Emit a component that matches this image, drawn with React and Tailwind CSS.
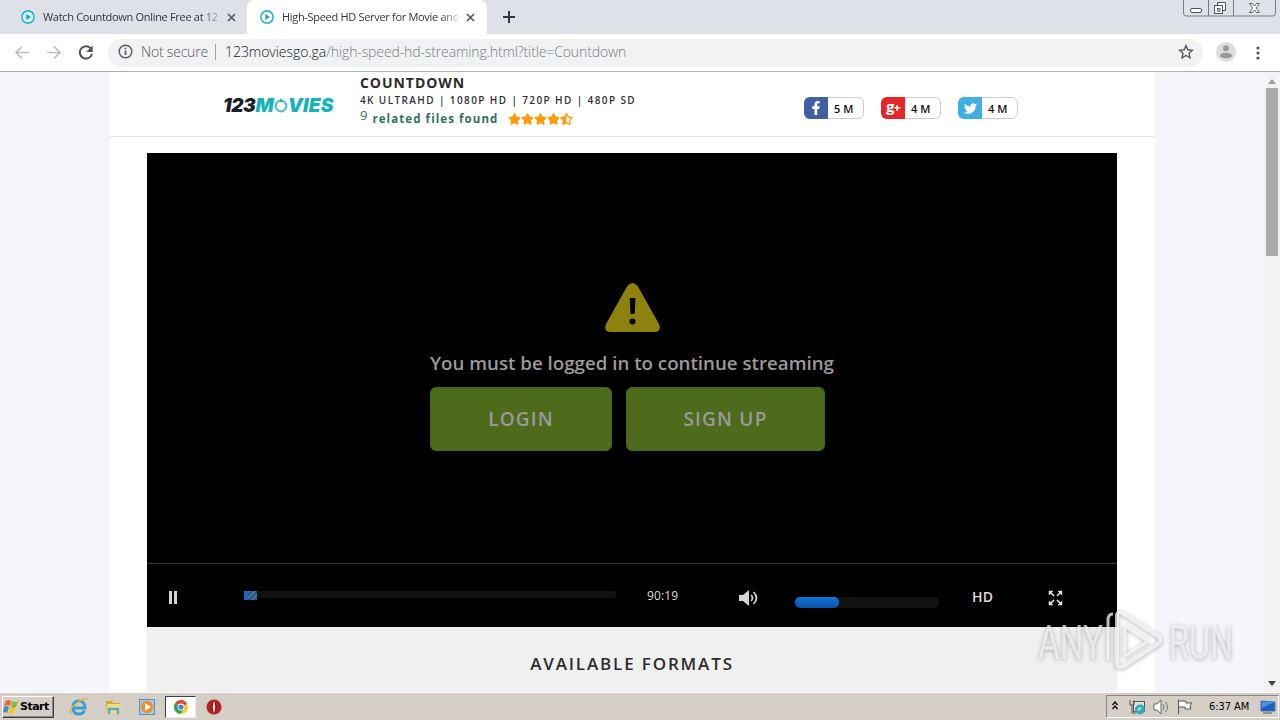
import { FaFacebookF, FaTwitter, FaStar, FaRegStar, FaStarHalfAlt } from 'react-icons/fa';

const shares = [
  { name: 'facebook', count: '5 M', color: 'bg-[#41609f]' },
  { name: 'google', count: '4 M', color: 'bg-[#e52528]' },
  { name: 'twitter', count: '4 M', color: 'bg-[#41b0e0]' },
];

function PlayBadge({ fill }) {
  return (
    <svg className="w-[14px] h-[14px] shrink-0" viewBox="0 0 14 14">
      <circle cx="7" cy="7" r="6.1" fill={fill} stroke="#2bb5c8" strokeWidth="1.6" />
      <path d="M5.3 4v6l4.6-3z" fill="#18a5bd" />
    </svg>
  );
}

function CloseIcon() {
  return (
    <svg className="w-[9px] h-[9px] shrink-0" viewBox="0 0 9 9">
      <path d="M1 1l7 7M8 1L1 8" stroke="#55585d" strokeWidth="1.7" />
    </svg>
  );
}

function TabStrip() {
  return (
    <div className="h-[34px] shrink-0 flex items-start bg-[#dee1e8] text-[11px] text-[#32353a]">
      <div className="w-[247px] h-[34px] pl-[21px] flex items-center">
        <PlayBadge fill="#d7f2f5" />
        <div className="ml-2 w-[176px] whitespace-nowrap tracking-[-0.31px] [mask-image:linear-gradient(to_right,black_158px,transparent_181px)]">
          Watch Countdown Online Free at 12
        </div>
        <div className="ml-[8px]"><CloseIcon /></div>
      </div>
      <div className="w-[240px] h-[34px] pl-[13px] flex items-center bg-white rounded-t-[8px]">
        <PlayBadge fill="#ffffff" />
        <div className="ml-[8px] w-[176px] whitespace-nowrap tracking-[-0.31px] [mask-image:linear-gradient(to_right,black_158px,transparent_181px)]">
          High-Speed HD Server for Movie and
        </div>
        <div className="ml-[8px]"><CloseIcon /></div>
      </div>
      <svg className="w-3 h-3 mt-[11px] ml-[16px]" viewBox="0 0 12 12">
        <path d="M6 0v12M0 6h12" stroke="#34373c" strokeWidth="2" />
      </svg>
      <svg className="w-[94px] h-[18px] ml-auto mr-[3px]" viewBox="0 0 94 18" fill="none">
        <path d="M.5 0v13q0 3 3 3h86q3 0 3-3V0M25.500 0v16M50.500 0v16" stroke="#787c86" />
        <rect x="7.500" y="8.500" width="11" height="4" rx="1.500" fill="#fff" stroke="#50545d" />
        <path d="M34.500 5.500v-3h8v8h-3" fill="#fff" stroke="#50545d" />
        <rect x="31.500" y="5.500" width="8" height="8" fill="#fff" stroke="#50545d" />
        <rect x="34.500" y="8.500" width="2.500" height="2.500" stroke="#50545d" />
        <path d="M66.500 3.500h3l2 2.500 2-2.500h3l-3.200 4.500 3.200 4.500h-3l-2-2.500-2 2.500h-3l3.200-4.500z" fill="#fff" stroke="#60646d" />
      </svg>
    </div>
  );
}

function AddressBar() {
  return (
    <div className="h-[38px] shrink-0 flex items-center bg-white border-b border-[#adb0b0]">
      <svg className="w-[80px] h-4 ml-[14px] shrink-0" viewBox="0 0 80 16" fill="none" strokeWidth="1.7">
        <path d="M15 7.500H2M8 1.500L2 7.500l6 6M33 7.500h13M40 1.500l6 6-6 6" stroke="#babcbe" />
        <path d="M77 3.700A6.200 6.200 0 1 0 78 9" stroke="#515458" strokeWidth="2" />
        <path d="M78.700.5v6.500h-6.500z" fill="#515458" />
      </svg>
      <div className="ml-[14px] w-[1095px] h-[28px] rounded-full bg-[#f0f2f4] flex items-center px-[10px] pb-[2px] text-[14px] whitespace-nowrap">
        <svg className="w-[15px] h-[15px] shrink-0" viewBox="0 0 15 15" fill="none">
          <circle cx="7.500" cy="7.500" r="6.300" stroke="#595c60" strokeWidth="1.500" />
          <path d="M7.500 6.500v4.500M7.500 3.700v1.600" stroke="#595c60" strokeWidth="1.700" />
        </svg>
        <span className="ml-[8px] w-[67px] font-light tracking-[-0.2px] text-[#55585d]">Not secure</span>
        <span className="ml-[7px] w-px h-4 bg-[#9da0a5]" />
        <span className="ml-[9px] font-light tracking-[-0.05px] text-[#15181d]">123moviesgo.ga</span>
        <span className="font-light tracking-[-0.12px] text-[#777b81]">/high-speed-hd-streaming.html?title=Countdown</span>
        <svg className="w-[16px] h-[16px] ml-auto mr-[-1px] shrink-0" viewBox="0 0 16 16">
          <path d="M8 1.500l1.800 4.300 4.700.4-3.500 3.100 1 4.600L8 11.500l-4 2.400 1-4.600-3.500-3.100 4.700-.4z" fill="none" stroke="#55585c" strokeWidth="1.400" />
        </svg>
      </div>
      <svg className="w-5 h-5 ml-[13px] mb-[2px]" viewBox="0 0 20 20">
        <circle cx="10" cy="10" r="10" fill="#dcdcdc" />
        <circle cx="10" cy="6.300" r="3" fill="#999" />
        <ellipse cx="10" cy="13.500" rx="6" ry="2.800" fill="#999" />
      </svg>
      <svg className="w-1 h-[14px] ml-[20px]" viewBox="0 0 4 14" fill="#505358">
        <circle cx="2" cy="2" r="1.600" /><circle cx="2" cy="7" r="1.600" /><circle cx="2" cy="12" r="1.600" />
      </svg>
    </div>
  );
}

function ShareIcon({ name }) {
  if (name === 'facebook') return <FaFacebookF className="w-[14px] h-[14px]" />;
  if (name === 'twitter') return <FaTwitter className="w-[13px] h-[13px]" />;
  return <span className="text-[15px] leading-none font-bold tracking-[-1px] pb-[4px]">g<span className="text-[13px]">+</span></span>;
}

function SiteHeader() {
  return (
    <div className="h-[65px] shrink-0 flex border-b border-[#e5e5e5] bg-white">
      <div className="ml-[113px] mt-[22px] w-[137px] h-[22px] flex items-center font-['Inter'] text-[19px] leading-none font-black italic">
        <span className="text-[#1c1f2b] tracking-[-0.4px]">123</span>
        <span className="text-[#16b3bb] tracking-[0.2px] flex items-center">
          M
          <svg className="w-[14px] h-[15px]" viewBox="0 0 14 15">
            <circle cx="7" cy="8" r="5.300" fill="none" stroke="#62c6c9" strokeWidth="2.400" />
            <path d="M6.500 0l3 4h-4z" fill="#16b3bb" />
          </svg>
          VIES
        </span>
      </div>
      <div className="w-[444px] whitespace-nowrap">
        <div className="mt-[2px] h-[17px] text-[14px] leading-[17px] font-bold tracking-[0.95px] text-[#2b2b2b]">COUNTDOWN</div>
        <div className="mt-px h-[16px] text-[10px] leading-[17px] font-semibold tracking-[1.39px] text-[#303030]">4K ULTRAHD | 1080P HD | 720P HD | 480P SD</div>
        <div className="flex h-[20px] text-[#33705f]">
          <span className="text-[13px] leading-[15px]">9</span>
          <span className="ml-[5px] w-[125px] text-[11.5px] leading-[22px] font-bold tracking-[1.08px]">related files found</span>
          <span className="ml-[11px] mt-[5px] flex text-[#ff9c0d]">
            {[0, 1, 2, 3].map((n) => <FaStar key={n} className="w-[13px] h-[12px]" />)}
            <span className="relative w-[13px] h-[12px]">
              <FaRegStar className="absolute inset-0 w-[13px] h-[12px] opacity-60" />
              <FaStarHalfAlt className="absolute inset-0 w-[13px] h-[12px]" />
            </span>
          </span>
        </div>
      </div>
      <div className="mt-[25px] flex gap-[17px]">
        {shares.map((s) => (
          <div key={s.name} className="w-[60px] h-[22px] flex rounded-[6px] border border-[#cccccc] bg-white">
            <div className={`w-[24px] h-[22px] -ml-px -mt-px rounded-l-[6px] shrink-0 flex items-center justify-center text-white ${s.color}`}>
              <ShareIcon name={s.name} />
            </div>
            <span className="ml-[6px] text-[11px] leading-[22px] font-semibold tracking-[0.1px] text-[#111] whitespace-nowrap">{s.count}</span>
          </div>
        ))}
      </div>
    </div>
  );
}

function Player() {
  return (
    <div className="mt-4 ml-[37px] w-[970px] h-[474px] shrink-0 bg-black flex flex-col">
      <div className="h-[410px] pl-[283px] text-[#9a9a9a]">
        <svg className="mt-[130px] ml-[175px] w-[55px] h-[49px]" viewBox="0 0 55 49">
          <path d="M22 3.500Q27.500-3.500 33 3.500L54 41q3 8-5 8H6q-8 0-5-8z" fill="#8e820f" />
          <path d="M24.700 15h5.800l-.8 16h-4.200z" fill="#000" />
          <circle cx="27.500" cy="38.500" r="3" fill="#000" />
        </svg>
        <p className="mt-[17px] h-[28px] text-[18.72px] leading-[28px] font-semibold whitespace-nowrap">You must be logged in to continue streaming</p>
        <div className="mt-[10px] flex gap-[14px] text-[19px] font-semibold tracking-[1.2px]">
          <button className="w-[182px] h-[64px] rounded-[6px] bg-[#4d6b1b] border border-[#3d651b]">LOGIN</button>
          <button className="w-[199px] h-[64px] rounded-[6px] bg-[#4d6b1b] border border-[#3d651b]">SIGN UP</button>
        </div>
      </div>
      <div className="h-[64px] border-t border-[#3a3a3a] flex items-start text-[#dddddd]">
        <div className="ml-[22px] mt-[27px] flex gap-[2px]">
          <span className="w-[3px] h-[13px] bg-[#d4d4d4]" />
          <span className="w-[3px] h-[13px] bg-[#d4d4d4]" />
        </div>
        <div className="ml-[67px] mt-[27px] w-[372px] h-[9px] flex">
          <span className="w-[4px] h-[9px] bg-[#1b67b9]" />
          <span className="w-[9px] h-[9px] bg-[repeating-linear-gradient(135deg,#50718f_0_2px,#17579b_2px_4px)]" />
          <span className="w-[359px] h-[7px] bg-[#111] rounded-r-[3px]" />
        </div>
        <span className="ml-[31px] mt-[23px] w-[92px] text-[12px] leading-[18px] tracking-[0.1px]">90:19</span>
        <svg className="mt-[26px] w-[20px] h-4" viewBox="0 0 20 16">
          <path d="M0 5h4l6-5v16l-6-5H0z" fill="#d5d5d5" />
          <path d="M12 5q3 3 0 6M14.500 2q6 6 0 12" fill="none" stroke="#d5d5d5" strokeWidth="1.700" />
        </svg>
        <div className="ml-[36px] mt-[33px] w-[144px] h-[11px] rounded-[5px] bg-[#111]">
          <div className="w-[44px] h-[11px] rounded-[5px] bg-gradient-to-b from-[#1474dc] to-[#0b50a6]" />
        </div>
        <span className="ml-[33px] mt-[22px] w-[76px] text-[14px] leading-[22px] font-semibold tracking-[0.3px]">HD</span>
        <svg className="mt-[26px] w-[15px] h-4" viewBox="0 0 15 16" fill="#e3e3e3" stroke="#e3e3e3">
          <path d="M1 1h4L1 5zM14 1h-4l4 4zM1 15h4l-4-4zM14 15h-4l4-4z" strokeWidth=".5" />
          <path d="M2 2l4 4M13 2L9 6M2 14l4-4M13 14l-4-4" strokeWidth="1.600" />
        </svg>
      </div>
    </div>
  );
}

function Scrollbar() {
  return (
    <div className="w-[16px] shrink-0 bg-[#f1f2f3] flex flex-col items-center">
      <svg className="w-2 h-[5px] mt-[7px]" viewBox="0 0 8 5"><path d="M0 5l4-5 4 5z" fill="#9b9b9b" /></svg>
      <div className="mt-[4px] w-[12px] h-[168px] bg-[#a9a9a9]" />
      <svg className="w-2 h-[5px] mt-auto mb-[6px]" viewBox="0 0 8 5"><path d="M0 0l4 5 4-5z" fill="#444" /></svg>
    </div>
  );
}

function Watermark() {
  return (
    <svg className="absolute left-[1030px] top-[602px] w-[210px] h-[78px] overflow-visible drop-shadow-[0_1px_2px_rgba(0,0,0,0.4)]" viewBox="0 0 210 78">
      <g fill="#f7f7f7" fillOpacity=".7" fontFamily="Roboto" fontSize="48" fontWeight="400">
        <text x="8" y="57" textLength="65" lengthAdjust="spacingAndGlyphs">ANY</text>
        <text x="139" y="57" textLength="64" lengthAdjust="spacingAndGlyphs">RUN</text>
      </g>
      <g fill="none" stroke="#fafafa" strokeOpacity=".75" strokeLinejoin="round">
        <path d="M83 12q-5 0-5 6v40" strokeWidth="3" />
        <path d="M87 12v48q0 7 7 4l34-22q5-4 0-8L92 11q-5-2-5 3" strokeWidth="4" />
        <path d="M95 24v30l23-15z" strokeWidth="3" />
      </g>
    </svg>
  );
}

function Taskbar() {
  return (
    <div className="h-[28px] shrink-0 flex items-center bg-[#d5cec7] border-t border-white font-['DejaVu_Sans_Condensed','Liberation_Sans',sans-serif] text-black">
      <div className="ml-[2px] w-[52px] h-[22px] flex items-center gap-px bg-[#d5cec7] border border-t-white border-l-white border-r-[#404040] border-b-[#404040] shadow-[inset_-1px_-1px_#888]">
        <svg className="w-4 h-4 shrink-0" viewBox="0 0 16 16">
          <path d="M3 2q3-2 5 0L7 7q-3-2-6 0z" fill="#ef642e" />
          <path d="M9 2q3 2 6 0l-2 6q-3 2-5 0z" fill="#82bd3e" />
          <path d="M1 8q3-2 5 0l-2 6q-2-2-4 0z" fill="#3b8ac5" />
          <path d="M7 8q3 2 6 0l-2 6q-3 2-6 0z" fill="#f8c530" />
        </svg>
        <span className="mt-[2px] text-[11px] font-bold font-['DejaVu_Sans'] tracking-[-0.5px]">Start</span>
      </div>
      <svg className="w-[20px] h-[18px] ml-[15px]" viewBox="0 0 20 18" fill="none">
        <path d="M5 10h11q0-7-6-7-6 0-6 6.500 0 6.500 6 6.500 4 0 5.500-3.500" stroke="#3b9dd8" strokeWidth="3" />
        <path d="M2 16Q-1 11 8 5q9-7 11-3" stroke="#e1b23c" strokeWidth="1.500" />
      </svg>
      <svg className="w-[17px] h-[16px] ml-[16px]" viewBox="0 0 17 16">
        <path d="M1 2h6l1 2h7v9H1z" fill="#d9a732" /><path d="M2 5h13l1 9H1z" fill="#f4dc7d" />
        <path d="M4 15v-5h9v5" fill="none" stroke="#56aacc" strokeWidth="2.500" />
      </svg>
      <svg className="w-[16px] h-[16px] ml-[17px]" viewBox="0 0 16 16">
        <rect x=".5" y=".5" width="15" height="15" fill="#9fc9e8" stroke="#5590bd" />
        <circle cx="8" cy="8" r="6" fill="#f18b19" /><path d="M6 4v8l6-4z" fill="#fff" />
      </svg>
      <div className="ml-[10px] w-[31px] h-[22px] flex items-center justify-center bg-white border border-t-[#404040] border-l-[#404040] border-r-[#eee] border-b-[#eee]">
        <svg className="w-[14px] h-[14px]" viewBox="0 0 14 14">
          <circle cx="7" cy="7" r="7" fill="#fac92e" />
          <path d="M7 7L1 3.300A7 7 0 0 1 13 3.700z" fill="#dc4736" />
          <path d="M7 7L1 3.300A7 7 0 0 0 6.500 14l3.500-6z" fill="#35a257" />
          <circle cx="7" cy="7" r="3.400" fill="#fff" /><circle cx="7" cy="7" r="2.600" fill="#4383de" />
        </svg>
      </div>
      <svg className="w-[16px] h-[16px] ml-[10px]" viewBox="0 0 16 16">
        <circle cx="8" cy="8" r="7.500" fill="#b51e23" /><ellipse cx="8" cy="8" rx="1.800" ry="5.500" fill="#f1d9d5" stroke="#7c0b10" />
      </svg>
      <div className="ml-auto mr-[1px] w-[173px] h-[23px] flex items-center border border-t-[#88847f] border-l-[#88847f] border-r-white border-b-white">
        <svg className="ml-[5px] w-[6px] h-[9px] mb-[2px]" viewBox="0 0 6 9" fill="none" stroke="#000" strokeWidth="1.300"><path d="M.5 4L3 1l2.500 3M.5 8L3 5l2.500 3" /></svg>
        <svg className="ml-[11px] w-[16px] h-[16px]" viewBox="0 0 16 16">
          <rect x="4.500" y="2.500" width="11" height="10" fill="#d7e1df" stroke="#555" />
          <path d="M1 1v5h4V1M3 6v8h4" fill="none" stroke="#555" />
          <circle cx="11" cy="10.500" r="5" fill="#36a7ad" /><path d="M8 11q2-5 5-2-2 4-5 2z" fill="#9bd9d2" />
        </svg>
        <svg className="ml-[8px] w-[17px] h-[16px]" viewBox="0 0 17 16">
          <path d="M1 5h3l4-4v14l-4-4H1z" fill="#fff" stroke="#666" />
          <path d="M10 5q2 3 0 6M12.500 3q4 5 0 10" fill="none" stroke="#777" />
        </svg>
        <svg className="ml-[7px] w-[17px] h-[16px]" viewBox="0 0 17 16"><path d="M1.500 1v14M2 2h7v2h6l-2 3 1 3H8V8H2" fill="#fff" stroke="#555" /></svg>
        <span className="ml-[15px] mt-[2px] w-[42px] text-[11px] tracking-[-0.05px] whitespace-nowrap">6:37 AM</span>
        <svg className="ml-[9px] w-[16px] h-[14px]" viewBox="0 0 16 14"><path d="M1 1l14 1v9H1z" fill="#1a5fc3" stroke="#47779f" /><path d="M2 2h12L2 8z" fill="#4f94e3" /><path d="M3 13h9" stroke="#555" /></svg>
      </div>
    </div>
  );
}

export default function App() {
  return (
    <div className="relative w-[1280px] h-[720px] flex flex-col overflow-hidden bg-white font-['Open_Sans','Noto_Sans',sans-serif]">
      <TabStrip />
      <AddressBar />
      <div className="flex-1 min-h-0 flex bg-[#f4f6fa]">
        <div className="ml-[110px] w-[1045px] flex flex-col bg-white overflow-hidden">
          <SiteHeader />
          <Player />
          <div className="ml-[37px] w-[970px] h-[65px] shrink-0 bg-[#f0f0f0] text-center">
            <h2 className="pt-[24px] text-[17px] leading-[25px] font-semibold tracking-[1.85px] text-[#2c2c2c]">AVAILABLE FORMATS</h2>
          </div>
        </div>
        <div className="ml-auto flex"><Scrollbar /></div>
      </div>
      <Taskbar />
      <Watermark />
    </div>
  );
}
